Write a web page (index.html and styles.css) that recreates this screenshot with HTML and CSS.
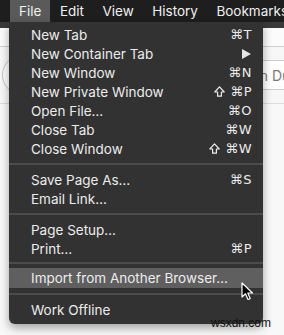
FILE: index.html
```html
<!DOCTYPE html>
<html lang="en">
<head>
  <meta charset="UTF-8">
  <title>File menu</title>
  <link rel="stylesheet" href="styles.css">
</head>
<body>

<div class="menubar">
  <span class="menubar-item active">File</span>
  <span class="menubar-item">Edit</span>
  <span class="menubar-item">View</span>
  <span class="menubar-item">History</span>
  <span class="menubar-item">Bookmarks</span>
</div>

<div class="window">
  <div class="tabstrip"></div>
  <div class="tabbar"></div>
  <div class="toolbar">
    <div class="back-btn"></div>
    <div class="urlfield">Search on DuckDuckGo</div>
  </div>
  <div class="page"></div>
</div>

<!-- File menu -->
<div class="menu">
  <div class="item"><span>New Tab</span><span class="key">⌘T</span></div>
  <div class="item"><span>New Container Tab</span>
    <svg class="arrow" width="9" height="10" viewBox="0 0 9 10"><polygon points="0,0 9,5 0,10" fill="#e6e6e6"/></svg>
  </div>
  <div class="item"><span>New Window</span><span class="key">⌘N</span></div>
  <div class="item"><span>New Private Window</span>
    <span class="key"><svg class="shift" width="11" height="11" viewBox="0 0 11 11"><path d="M5.5 0.8 L10.2 6 L7.4 6 L7.4 10.2 L3.6 10.2 L3.6 6 L0.8 6 Z" fill="none" stroke="#ececec" stroke-width="1.2" stroke-linejoin="round"/></svg>⌘P</span>
  </div>
  <div class="item"><span>Open File…</span><span class="key">⌘O</span></div>
  <div class="item"><span>Close Tab</span><span class="key">⌘W</span></div>
  <div class="item"><span>Close Window</span>
    <span class="key"><svg class="shift" width="11" height="11" viewBox="0 0 11 11"><path d="M5.5 0.8 L10.2 6 L7.4 6 L7.4 10.2 L3.6 10.2 L3.6 6 L0.8 6 Z" fill="none" stroke="#ececec" stroke-width="1.2" stroke-linejoin="round"/></svg>⌘W</span>
  </div>
  <div class="sep"></div>
  <div class="item"><span>Save Page As…</span><span class="key">⌘S</span></div>
  <div class="item"><span>Email Link…</span></div>
  <div class="sep"></div>
  <div class="item"><span>Page Setup…</span></div>
  <div class="item"><span>Print…</span><span class="key">⌘P</span></div>
  <div class="sep short"></div>
  <div class="item hover"><span>Import from Another Browser…</span></div>
  <div class="sep"></div>
  <div class="item tall"><span>Work Offline</span></div>
</div>

<svg class="cursor" width="13" height="19" viewBox="0 0 13 19">
  <path d="M1 1 L1 15 L4.5 11.8 L7 17.5 L9.2 16.6 L6.8 11 L11.5 11 Z" fill="#000" stroke="#fff" stroke-width="1.2" stroke-linejoin="round"/>
</svg>

<div class="watermark">wsxdn.com</div>

</body>
</html>
```

FILE: styles.css
```css
body {
  margin: 0;
  width: 284px;
  height: 335px;
  overflow: hidden;
  position: relative;
  display: flex;
  flex-direction: column;
  font-family: Inter, "DejaVu Sans", sans-serif;
  background: #f6f6f6;
}
.menubar {
  height: 22px;
  display: flex;
  align-items: center;
  padding-left: 10px;
  background: #1e1e1e;
  color: #f0f0f0;
  font-size: 13.5px;
  white-space: nowrap;
  overflow: hidden;
}
.menubar-item {
  height: 22px;
  line-height: 22px;
  padding: 0 9px;
  margin-right: 0.5px;
  flex-shrink: 0;
}
.menubar-item.active {
  background: #5a5a5a;
}
.window {
  flex: 1;
  display: flex;
  flex-direction: column;
}
.tabstrip {
  height: 6px;
  background: #3a3a3a;
}
.tabbar {
  height: 18px;
  background: #fbfbfb;
  border-bottom: 1px solid #cfcfcf;
}
.toolbar {
  height: 56px;
  display: flex;
  align-items: center;
  background: #f7f7f7;
  border-bottom: 1px solid #dcdcdc;
  overflow: hidden;
}
.back-btn {
  width: 38px;
  height: 38px;
  margin-left: 2px;
  border: 1px solid #c4c4c4;
  border-radius: 50%;
  background: #fdfdfd;
  flex-shrink: 0;
}
.urlfield {
  margin-left: auto;
  height: 30px;
  width: 190px;
  border: 1px solid #cdcdcd;
  border-right: none;
  border-radius: 4px 0 0 4px;
  background: #fff;
  color: #7a7a7a;
  font-size: 14px;
  line-height: 29px;
  padding-left: 106px;
  white-space: nowrap;
  overflow: hidden;
  box-sizing: border-box;
  flex-shrink: 0;
}
.page {
  flex: 1;
  background: #f8f8f8;
}
/* Menu */
.menu {
  position: absolute;
  top: 22px;
  left: 9px;
  width: 254px;
  padding: 3px 0 4px;
  box-sizing: border-box;
  background: #323232;
  border-radius: 0 0 6px 6px;
  box-shadow: 0 4px 10px rgba(0,0,0,0.35);
  color: #ececec;
  font-size: 13.5px;
}
.item {
  height: 19px;
  display: flex;
  align-items: center;
  justify-content: space-between;
  padding: 0 11px 0 22px;
  white-space: nowrap;
}
.item.hover {
  height: 20px;
  background: #5f5f5f;
}
.item.tall {
  height: 20px;
}
.key {
  display: flex;
  align-items: center;
  font-family: "DejaVu Sans", sans-serif;
  font-size: 13px;
  letter-spacing: 0.5px;
}
.shift {
  margin-right: 5px;
}
.sep {
  height: 12px;
  display: flex;
  align-items: center;
}
.sep::after {
  content: "";
  flex: 1;
  height: 2px;
  background: #4c4c4c;
}
.sep.short {
  height: 10px;
}
.arrow {
  margin-right: 1px;
}
.cursor {
  position: absolute;
  left: 241px;
  top: 282px;
}
.watermark {
  position: absolute;
  left: 211px;
  top: 316px;
  font-family: "Liberation Sans", Arial, sans-serif;
  font-size: 12px;
  color: #111;
}
```
